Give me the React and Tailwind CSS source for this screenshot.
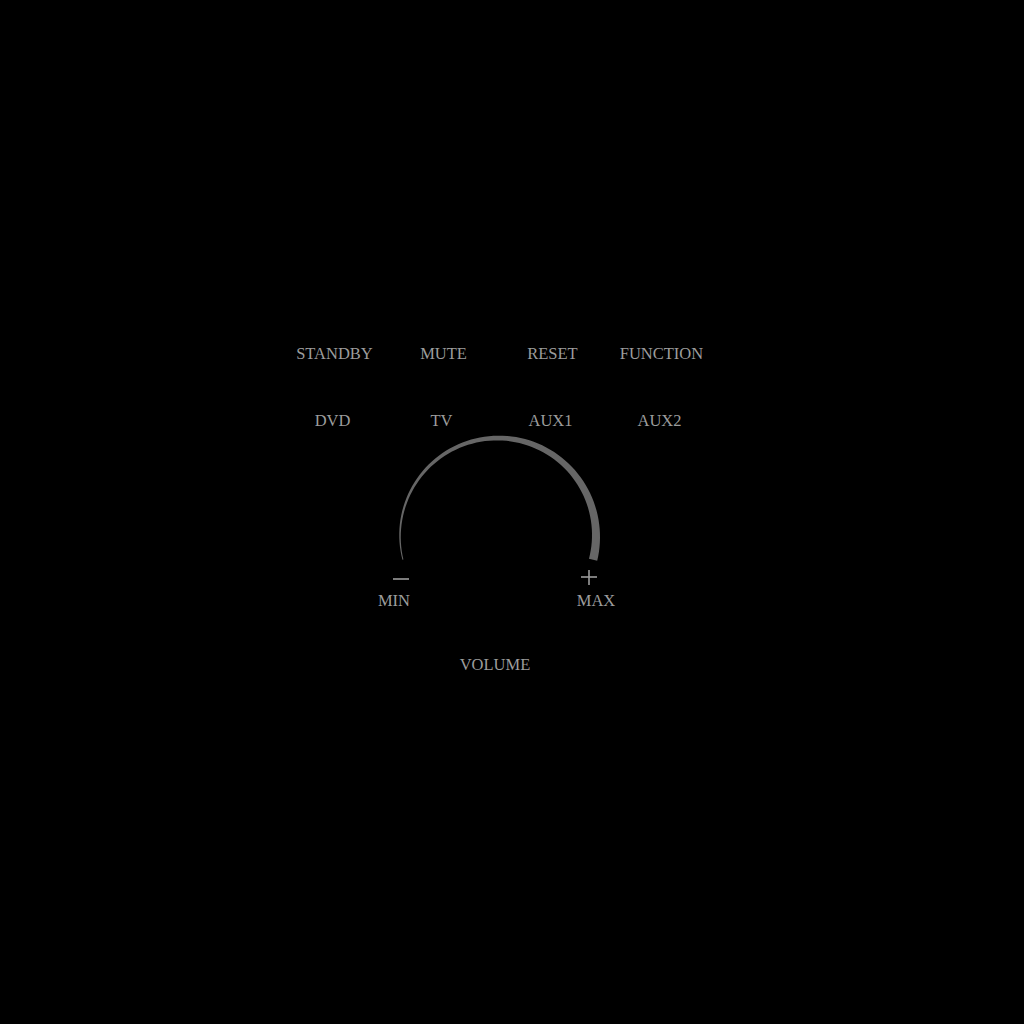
const topRow = ['STANDBY', 'MUTE', 'RESET', 'FUNCTION'];
const bottomRow = ['DVD', 'TV', 'AUX1', 'AUX2'];

// tapered volume arc, thin at MIN, thick at MAX
const buildArc = (cx, cy, r, from, to, w0, w1, steps = 80) => {
    const outer = [];
    const inner = [];
    for (let i = 0; i <= steps; i++) {
        const t = i / steps;
        const a = ((from + (to - from) * t) * Math.PI) / 180;
        const w = w0 + (w1 - w0) * t;
        outer.push([cx + (r + w / 2) * Math.cos(a), cy - (r + w / 2) * Math.sin(a)]);
        inner.push([cx + (r - w / 2) * Math.cos(a), cy - (r - w / 2) * Math.sin(a)]);
    }
    const pts = [...outer, ...inner.reverse()];
    return 'M' + pts.map(([x, y]) => `${x.toFixed(2)},${y.toFixed(2)}`).join(' L') + ' Z';
};

const Label = ({ children }) => (
    <div className="text-center text-[16.5px] leading-6 text-[#9c9c9c]">{children}</div>
);

export default function App() {
    const arc = buildArc(120, 103, 98, 194, -14, 1, 8.5);

    return (
        <div className="min-h-screen w-full bg-black pt-[342px] font-['Liberation_Serif',serif]">
            {/* Buttons */}
            <div className="ml-[280px] grid w-[436px] grid-cols-4">
                {topRow.map((l) => (
                    <Label key={l}>{l}</Label>
                ))}
            </div>
            <div className="mt-[43px] ml-[278px] grid w-[436px] grid-cols-4">
                {bottomRow.map((l) => (
                    <Label key={l}>{l}</Label>
                ))}
            </div>

            {/* Volume knob */}
            <svg width="240" height="132" viewBox="0 0 240 132" className="ml-[378px] block">
                <path d={arc} fill="#666666" />
            </svg>

            <div className="ml-[374px] flex w-[242px] justify-between">
                <div className="flex w-10 flex-col items-center">
                    <svg width="18" height="16" viewBox="0 0 18 16" className="mt-[5px] ml-[14px]">
                        <line x1="1" y1="9" x2="17" y2="9" stroke="#9c9c9c" strokeWidth="1.6" />
                    </svg>
                    <div className="mt-[5px] text-[16.5px] leading-5 text-[#9c9c9c]">MIN</div>
                </div>
                <div className="flex w-10 flex-col items-center">
                    <svg width="18" height="16" viewBox="0 0 18 16" className="mt-[5px] mr-[14px]">
                        <line x1="1" y1="7" x2="17" y2="7" stroke="#9c9c9c" strokeWidth="1.6" />
                        <line x1="9" y1="-1" x2="9" y2="15" stroke="#9c9c9c" strokeWidth="1.6" />
                    </svg>
                    <div className="mt-[5px] text-[16.5px] leading-5 text-[#9c9c9c]">MAX</div>
                </div>
            </div>

            <div className="mt-[42px] ml-[445px] w-[100px] text-center text-[16.5px] leading-6 text-[#9c9c9c]">
                VOLUME
            </div>
        </div>
    );
}
